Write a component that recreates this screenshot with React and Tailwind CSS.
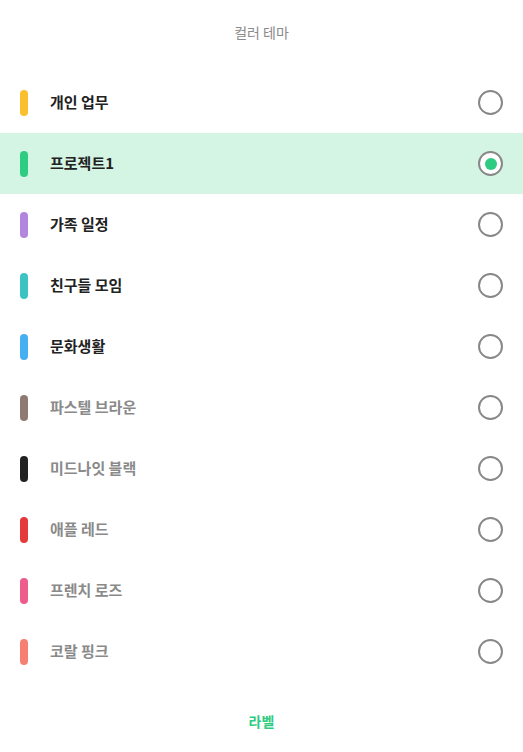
import { useState } from "react";

const themes = [
  { name: "개인 업무", color: "bg-[#fbbf2d]", active: true },
  { name: "프로젝트1", color: "bg-[#2ecb82]", active: true },
  { name: "가족 일정", color: "bg-[#b286dd]", active: true },
  { name: "친구들 모임", color: "bg-[#3ec3c3]", active: true },
  { name: "문화생활", color: "bg-[#46aff2]", active: true },
  { name: "파스텔 브라운", color: "bg-[#8e7a72]", active: false },
  { name: "미드나잇 블랙", color: "bg-[#222222]", active: false },
  { name: "애플 레드", color: "bg-[#e53a3a]", active: false },
  { name: "프렌치 로즈", color: "bg-[#ee5c8c]", active: false },
  { name: "코랄 핑크", color: "bg-[#f77f72]", active: false },
];

function Radio({ checked }) {
  return (
    <div className="w-[25px] h-[25px] rounded-full border-2 border-[#888888] bg-white flex items-center justify-center">
      {checked && <div className="w-3 h-3 rounded-full bg-[#2ecb82]" />}
    </div>
  );
}

export default function App() {
  const [selected, setSelected] = useState(1);

  return (
    <div className="w-[523px] h-[752px] bg-white flex flex-col font-['Noto_Sans_CJK_KR','Noto_Sans',sans-serif]">
      <div className="h-[64px] flex items-center justify-center text-[14px] text-[#8a8a8a]">
        컬러 테마
      </div>
      <div className="mt-2 flex flex-col">
        {themes.map((t, i) => (
          <button
            key={t.name}
            onClick={() => setSelected(i)}
            className={`h-[61px] flex items-center pl-5 pr-5 text-left ${
              selected === i ? "bg-[#d4f4e4]" : "bg-white"
            }`}
          >
            <div className={`w-2 h-[26px] rounded-full ${t.color}`} />
            <span
              className={`ml-[22px] flex-1 text-[15px] font-bold ${
                t.active ? "text-[#222222]" : "text-[#8a8a8a]"
              }`}
            >
              {t.name}
            </span>
            <Radio checked={selected === i} />
          </button>
        ))}
      </div>
      <div className="flex-1 flex items-center justify-center pt-2 text-[14px] font-bold text-[#2ecb82]">
        라벨
      </div>
    </div>
  );
}
